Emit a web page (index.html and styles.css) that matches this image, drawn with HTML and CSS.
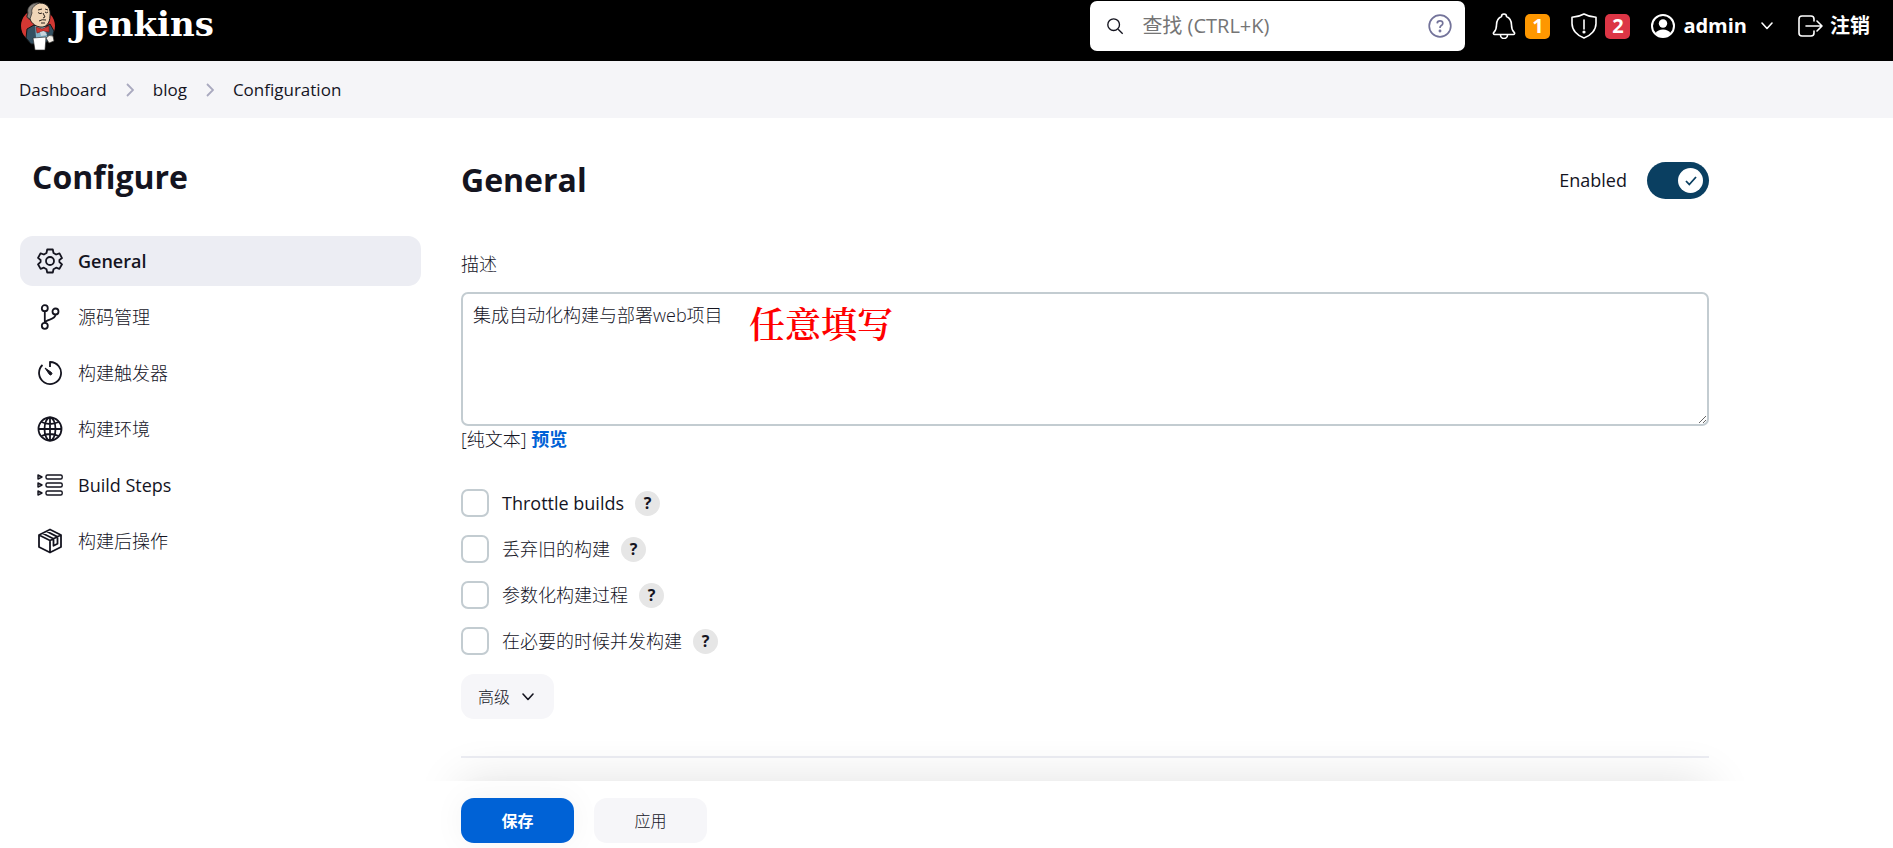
FILE: index.html
```html
<!DOCTYPE html>
<html lang="zh-CN">
<head>
<meta charset="utf-8">
<title>blog Config [Jenkins]</title>
<link rel="stylesheet" href="styles.css">
</head>
<body>
<header class="header">
  <a class="brand" href="#">
    <svg class="brand-logo" viewBox="0 0 34 50" aria-hidden="true">
      <circle cx="17" cy="25" r="17" fill="#d33833"/>
      <path d="M6 28 13 24 22 27 29 23 33 30 31 38 22 43 10 43 5 37Z" fill="#335061" stroke="#161616"/>
      <path d="M14 23 24 23 26 36 15 37Z" fill="#81b0c4"/>
      <path d="M7 13C6 6 12 1 19 2 27 2 30 8 29 15 29 22 25 27 19 26 13 25 10 21 9 18 5 18 6 13 7 13Z" fill="#f0d6b7" stroke="#161616"/>
      <path d="M7 12C5 6 12 1 18 2 12 5 10 8 11 12L9 18 6 16Z" fill="#8b8680" stroke="#242424" stroke-width=".7"/>
      <path d="M17 11.500q2 2 4 .5m3-1q1.500 1.500 3 0M22 12l2 4-2 1M18 20q3-2 7-1M20 22h4M17 9l4-1m3 0 3 1" fill="none" stroke="#29221c" stroke-width="1"/>
      <path d="M15 26 21 28 28 25 28 31 22 30 16 32Z" fill="#d33833" stroke="#7a1714" stroke-width=".6"/>
      <path d="M19 31 23 30 26 34 20 35Z" fill="#c9d5dd"/>
      <path d="M12 37 25 36 24 49 14 49Z" fill="#fff" stroke="#222" stroke-width=".6"/>
      <path d="M25 37Q28 33 32 35L33 40 28 42Z" fill="#f4efe8" stroke="#333" stroke-width=".7"/>
    </svg>
    <span>Jenkins</span>
  </a>
  <div class="header-tools">
    <div class="search">
      <svg class="search-icon" viewBox="0 0 20 20" aria-hidden="true"><circle cx="8.500" cy="8.500" r="6.500"/><path d="m13.500 13.500 5 5"/></svg>
      <input type="text" placeholder="查找 (CTRL+K)" aria-label="查找">
      <a class="search-help" href="#" aria-label="帮助"><svg viewBox="0 0 24 24"><circle cx="12" cy="12" r="10.800"/><path d="M9.200 9.400Q9.300 6.900 12 6.900t2.800 2.300q0 1.500-1.500 2.400T12 14"/><circle cx="12" cy="17" r=".6"/></svg></a>
    </div>
    <button class="tool tool-alert" type="button" aria-label="通知">
      <svg class="line" viewBox="0 0 26 26" aria-hidden="true"><path d="M10.500 3.500a2.500 2.500 0 0 1 5 0C19 5 20.500 8 20.500 12c0 5 1.300 6 2.700 7.400.8.900.3 2.100-.8 2.100H3.600c-1.100 0-1.600-1.200-.8-2.100C4.200 18 5.500 17 5.500 12c0-4 1.500-7 5-8.500ZM9.500 22a3.500 3.500 0 0 0 7 0"/></svg>
      <span class="badge badge-warning">1</span>
    </button>
    <button class="tool tool-alert" type="button" aria-label="安全警告">
      <svg class="line" viewBox="0 0 26 26" aria-hidden="true"><path d="M13 1C9.500 3 5.500 4 1 4.200v6.300C1 17 6 22.500 13 25c7-2.500 12-8 12-14.500V4.200C20.500 4 16.500 3 13 1ZM13 7v9"/><circle cx="13" cy="19" r=".8"/></svg>
      <span class="badge badge-danger">2</span>
    </button>
    <a class="tool tool-user" href="#">
      <svg class="person" viewBox="0 0 24 24" aria-hidden="true"><circle cx="12" cy="12" r="11" fill="none" stroke="#fff" stroke-width="2"/><circle cx="12" cy="9.500" r="4.200" fill="#fff"/><path d="M4.500 19Q7 15.500 12 15.500t7.500 3.500Q16 23 12 23t-7.500-4Z" fill="#fff"/></svg>
      <span>admin</span>
      <svg class="chevron" viewBox="0 0 12 12" aria-hidden="true"><path d="m1 3 5 5.500L11 3"/></svg>
    </a>
    <a class="tool tool-logout" href="#">
      <svg class="line" viewBox="0 0 26 26" aria-hidden="true"><path d="M17 8V6a3 3 0 0 0-3-3H5a3 3 0 0 0-3 3v14a3 3 0 0 0 3 3h9a3 3 0 0 0 3-3v-2M9 13h16M20 8l5 5-5 5"/></svg>
      <span>注销</span>
    </a>
  </div>
</header>

<nav class="breadcrumbs" aria-label="Breadcrumb">
  <a href="#">Dashboard</a>
  <svg viewBox="0 0 8 14" aria-hidden="true"><path d="m1 1 6 6-6 6"/></svg>
  <a href="#">blog</a>
  <svg viewBox="0 0 8 14" aria-hidden="true"><path d="m1 1 6 6-6 6"/></svg>
  <a href="#">Configuration</a>
</nav>

<div class="page">
  <aside class="sidebar">
    <h1>Configure</h1>
    <nav class="tasks" aria-label="Configure">
      <a class="task task-active" href="#">
        <svg viewBox="0 0 26 26" aria-hidden="true"><path d="M10.200 1.500h5.600l.7 3.500 2.600 1.500 3.400-1.200 2.500 4.800L22.400 12v2l2.600 2.300-2.600 4.600-3.300-1.200-2.600 1.500-.7 3.300h-5.600l-.7-3.300-2.600-1.500-3.300 1.200L1 16.300 3.600 14v-2L1 9.900l2.600-4.600 3.300 1.200L9.500 5Z"/><circle cx="13" cy="13" r="4"/></svg>
        <span>General</span>
      </a>
      <a class="task" href="#">
        <svg viewBox="0 0 26 26" aria-hidden="true"><circle cx="7.800" cy="4.200" r="3"/><circle cx="7.800" cy="21.800" r="3"/><circle cx="18.500" cy="7.500" r="3"/><path d="M7.800 7.200v11.600M18.500 10.500c0 6-9.500 4-10.700 8.300"/></svg>
        <span>源码管理</span>
      </a>
      <a class="task" href="#">
        <svg viewBox="0 0 26 26" aria-hidden="true"><path d="M5.500 5A11 11 0 1 0 13 2v5"/><path d="m8 8 6.500 4.500a1.300 1.300 0 0 1-2 2Z" fill="currentColor" stroke-width="1"/></svg>
        <span>构建触发器</span>
      </a>
      <a class="task" href="#">
        <svg viewBox="0 0 26 26" aria-hidden="true"><circle cx="13" cy="13" r="11.500"/><ellipse cx="13" cy="13" rx="5.500" ry="11.500"/><path d="M13 1.500v23M1.500 13h23M4.500 6q8.500 4 17 0M4.500 20q8.500-4 17 0"/></svg>
        <span>构建环境</span>
      </a>
      <a class="task" href="#">
        <svg class="thin" viewBox="0 0 26 26" aria-hidden="true"><rect x="9" y="3" width="16.200" height="4" rx="1.500"/><rect x="9" y="11" width="16.200" height="4" rx="1.500"/><rect x="9" y="19" width="16.200" height="4" rx="1.500"/><path d="m1 3 4 2-4 2ZM1 11l4 2-4 2ZM1 19l4 2-4 2Z"/></svg>
        <span class="latin">Build Steps</span>
      </a>
      <a class="task" href="#">
        <svg viewBox="0 0 26 26" aria-hidden="true"><path d="M13 1.500 24 7v12l-11 5.500L2 19V7ZM2 7l11 5.500L24 7M13 12.500v12M5.500 5.200l11 5.600v7l4-2V8.900L9.500 3.300"/></svg>
        <span>构建后操作</span>
      </a>
    </nav>
  </aside>

  <main class="main">
    <form class="config" id="config">
      <div class="section-head">
        <h2>General</h2>
        <label class="toggle">
          <span class="latin">Enabled</span>
          <input type="checkbox" checked>
          <span class="toggle-track"><svg viewBox="0 0 25 25" aria-hidden="true"><circle cx="12.500" cy="12.500" r="12.500" fill="#fff"/><path d="m8 13 3.300 3.500L18 9" fill="none" stroke="#0a3f61" stroke-width="1.800"/></svg></span>
        </label>
      </div>

      <div class="field">
        <label for="description">描述</label>
        <div class="field-box">
          <textarea id="description">集成自动化构建与部署web项目</textarea>
          <span class="note">任意填写</span>
        </div>
        <div class="field-foot">[纯文本] <a href="#">预览</a></div>
      </div>

      <div class="options">
        <div class="option"><input type="checkbox" id="throttle"><label class="latin" for="throttle">Throttle builds</label><button class="help" type="button">?</button></div>
        <div class="option"><input type="checkbox" id="discard"><label for="discard">丢弃旧的构建</label><button class="help" type="button">?</button></div>
        <div class="option"><input type="checkbox" id="params"><label for="params">参数化构建过程</label><button class="help" type="button">?</button></div>
        <div class="option"><input type="checkbox" id="concurrent"><label for="concurrent">在必要的时候并发构建</label><button class="help" type="button">?</button></div>
      </div>

      <button class="button button-advanced" type="button">高级 <svg class="chevron" viewBox="0 0 12 12" aria-hidden="true"><path d="m1 3 5 5.500L11 3"/></svg></button>
      <hr class="divider">
    </form>
    <div class="bottom-bar">
      <button class="button button-primary" type="submit" form="config">保存</button>
      <button class="button" type="button">应用</button>
    </div>
  </main>
</div>
</body>
</html>
```

FILE: styles.css
```css
* { box-sizing: border-box; }

body {
  margin: 0;
  min-height: 100vh;
  display: flex;
  flex-direction: column;
  background: #fff;
  color: #14141f;
  font: 300 18px/24px "Open Sans", "Noto Sans CJK SC", sans-serif;
  font-variant-ligatures: none;
}

a { color: inherit; text-decoration: none; }
button, input, textarea { font: inherit; color: inherit; }
button { border: 0; padding: 0; background: none; cursor: pointer; }
svg { display: block; flex: none; }

/* Latin labels need one step more weight than the Chinese ones */
.latin { font-weight: 400; }

.header {
  height: 61px;
  padding: 1px 23px 10px 21px;
  display: flex;
  align-items: center;
  justify-content: space-between;
  background: #000;
  color: #fff;
}

.brand {
  display: flex;
  align-items: center;
  gap: 16px;
  font: bold 34px/48px "DejaVu Serif", serif;
}
.brand span { padding-bottom: 4px; }
.brand-logo { width: 34px; height: 50px; }

.header-tools { display: flex; align-items: center; }

.search {
  width: 375px;
  height: 50px;
  margin-right: 26px;
  padding: 0 13px 0 16px;
  display: flex;
  align-items: center;
  gap: 18px;
  border-radius: 7px;
  background: #fff;
}
.search svg { fill: none; stroke: #14141f; stroke-width: 1.5; }
.search-icon { width: 18px; height: 18px; }
.search input {
  flex: 1;
  min-width: 0;
  border: 0;
  padding: 0;
  outline: 0;
  background: none;
  font-size: 20px;
  font-weight: 400;
}
.search input::placeholder { color: #757575; opacity: 1; }
.search-help svg { width: 24px; height: 24px; stroke: #73739a; stroke-width: 1.7; }

.tool {
  display: flex;
  align-items: center;
  color: #fff;
  font-size: 20px;
  font-weight: 700;
}
.tool svg { width: 26px; height: 26px; }
.tool .person { width: 24px; height: 24px; }
.tool .line, .chevron { fill: none; stroke: currentColor; stroke-width: 1.6; stroke-linecap: round; stroke-linejoin: round; }
.tool .chevron, .chevron { width: 12px; height: 12px; }
.tool-alert { gap: 8px; margin-right: 21px; }
.badge {
  width: 25px;
  height: 25px;
  border-radius: 5px;
  font-size: 20px;
  line-height: 24px;
  text-align: center;
}
.badge-warning { background: #fe9700; }
.badge-danger { background: #dc3545; }
.tool-user { gap: 8px; margin-right: 24px; }
.tool-user .chevron { margin-left: 6px; }
.tool-logout { gap: 7px; }

.breadcrumbs {
  height: 57px;
  padding: 0 19px;
  display: flex;
  align-items: center;
  gap: 19px;
  background: #f5f5f8;
  font-size: 17px;
  font-weight: 400;
}
.breadcrumbs svg {
  width: 8px;
  height: 14px;
  fill: none;
  stroke: #a9a9bf;
  stroke-width: 1.8;
}

.page {
  flex: 1;
  display: grid;
  grid-template-columns: 401px minmax(0, 1248px);
  gap: 40px;
  padding-left: 20px;
}

h1, h2 { margin: 0; font-size: 32px; line-height: 44px; font-weight: 700; }

.sidebar { padding-top: 37px; }
.sidebar h1 { padding-left: 12px; }
.tasks {
  margin-top: 37px;
  display: flex;
  flex-direction: column;
  gap: 6px;
}
.task {
  height: 50px;
  padding: 0 17px;
  display: flex;
  align-items: center;
  gap: 15px;
}
.task svg {
  width: 26px;
  height: 26px;
  fill: none;
  stroke: currentColor;
  stroke-width: 1.8;
  stroke-linejoin: round;
}
.task .thin { stroke-width: 1.4; }
.task-active { border-radius: 13px; background: #ecedf3; font-weight: 600; }

.main { display: flex; flex-direction: column; }
.config { flex: 1; padding-top: 40px; }

.section-head {
  display: flex;
  align-items: center;
  justify-content: space-between;
}
.toggle { display: flex; align-items: center; gap: 20px; }
.toggle input { position: absolute; opacity: 0; }
.toggle-track {
  width: 62px;
  height: 37px;
  padding: 6px;
  display: flex;
  justify-content: flex-end;
  border-radius: 19px;
  background: #0a3f61;
}
.toggle-track svg { width: 25px; height: 25px; }

.field { margin-top: 50px; }
.field > label { display: block; margin-bottom: 16px; }
.field-box { position: relative; }
textarea {
  display: block;
  width: 100%;
  height: 134px;
  padding: 9px 10px;
  border: 2px solid #c3ccd1;
  border-radius: 7px;
  outline: 0;
  background: #fff;
  line-height: 24px;
  resize: vertical;
}
.note {
  position: absolute;
  left: 288px;
  top: 7px;
  color: #f00;
  font: 600 36px/48px "Noto Serif CJK SC", "Noto Sans CJK SC", serif;
  pointer-events: none;
}
.field-foot { margin-top: 1px; }
.field-foot a { color: #0062d6; font-weight: 700; }

.options {
  margin-top: 38px;
  display: flex;
  flex-direction: column;
  gap: 18px;
}
.option { height: 28px; display: flex; align-items: center; gap: 11px; }
.option input {
  appearance: none;
  width: 28px;
  height: 28px;
  margin: 0 2px 0 0;
  border: 2px solid #c3ccd1;
  border-radius: 7px;
  background: #fff;
}
.help {
  width: 25px;
  height: 25px;
  border-radius: 50%;
  background: #e6e6e6;
  font-size: 16px;
  line-height: 24px;
  font-weight: 700;
}

.button {
  min-width: 113px;
  height: 45px;
  border-radius: 13px;
  background: #f6f6f9;
  font-size: 16px;
}
.button-advanced {
  min-width: 93px;
  margin-top: 19px;
  padding: 0 20px 0 17px;
  display: flex;
  align-items: center;
  justify-content: space-between;
}
.button-primary { background: #0062d6; color: #fff; font-weight: 700; box-shadow: 0 0 32px rgba(0, 0, 0, .05); }

.divider { margin: 37px 0 0; border: 0; height: 2px; background: #ecedf3; }

.bottom-bar {
  position: sticky;
  bottom: 0;
  height: 67px;
  padding-top: 17px;
  display: flex;
  gap: 20px;
  background: #fff;
}
.bottom-bar::before {
  content: "";
  position: absolute;
  inset: 0;
  box-shadow: 0 0 48px rgba(0, 0, 0, .12);
  clip-path: inset(-40px -40px 100% -40px);
  pointer-events: none;
}
```
